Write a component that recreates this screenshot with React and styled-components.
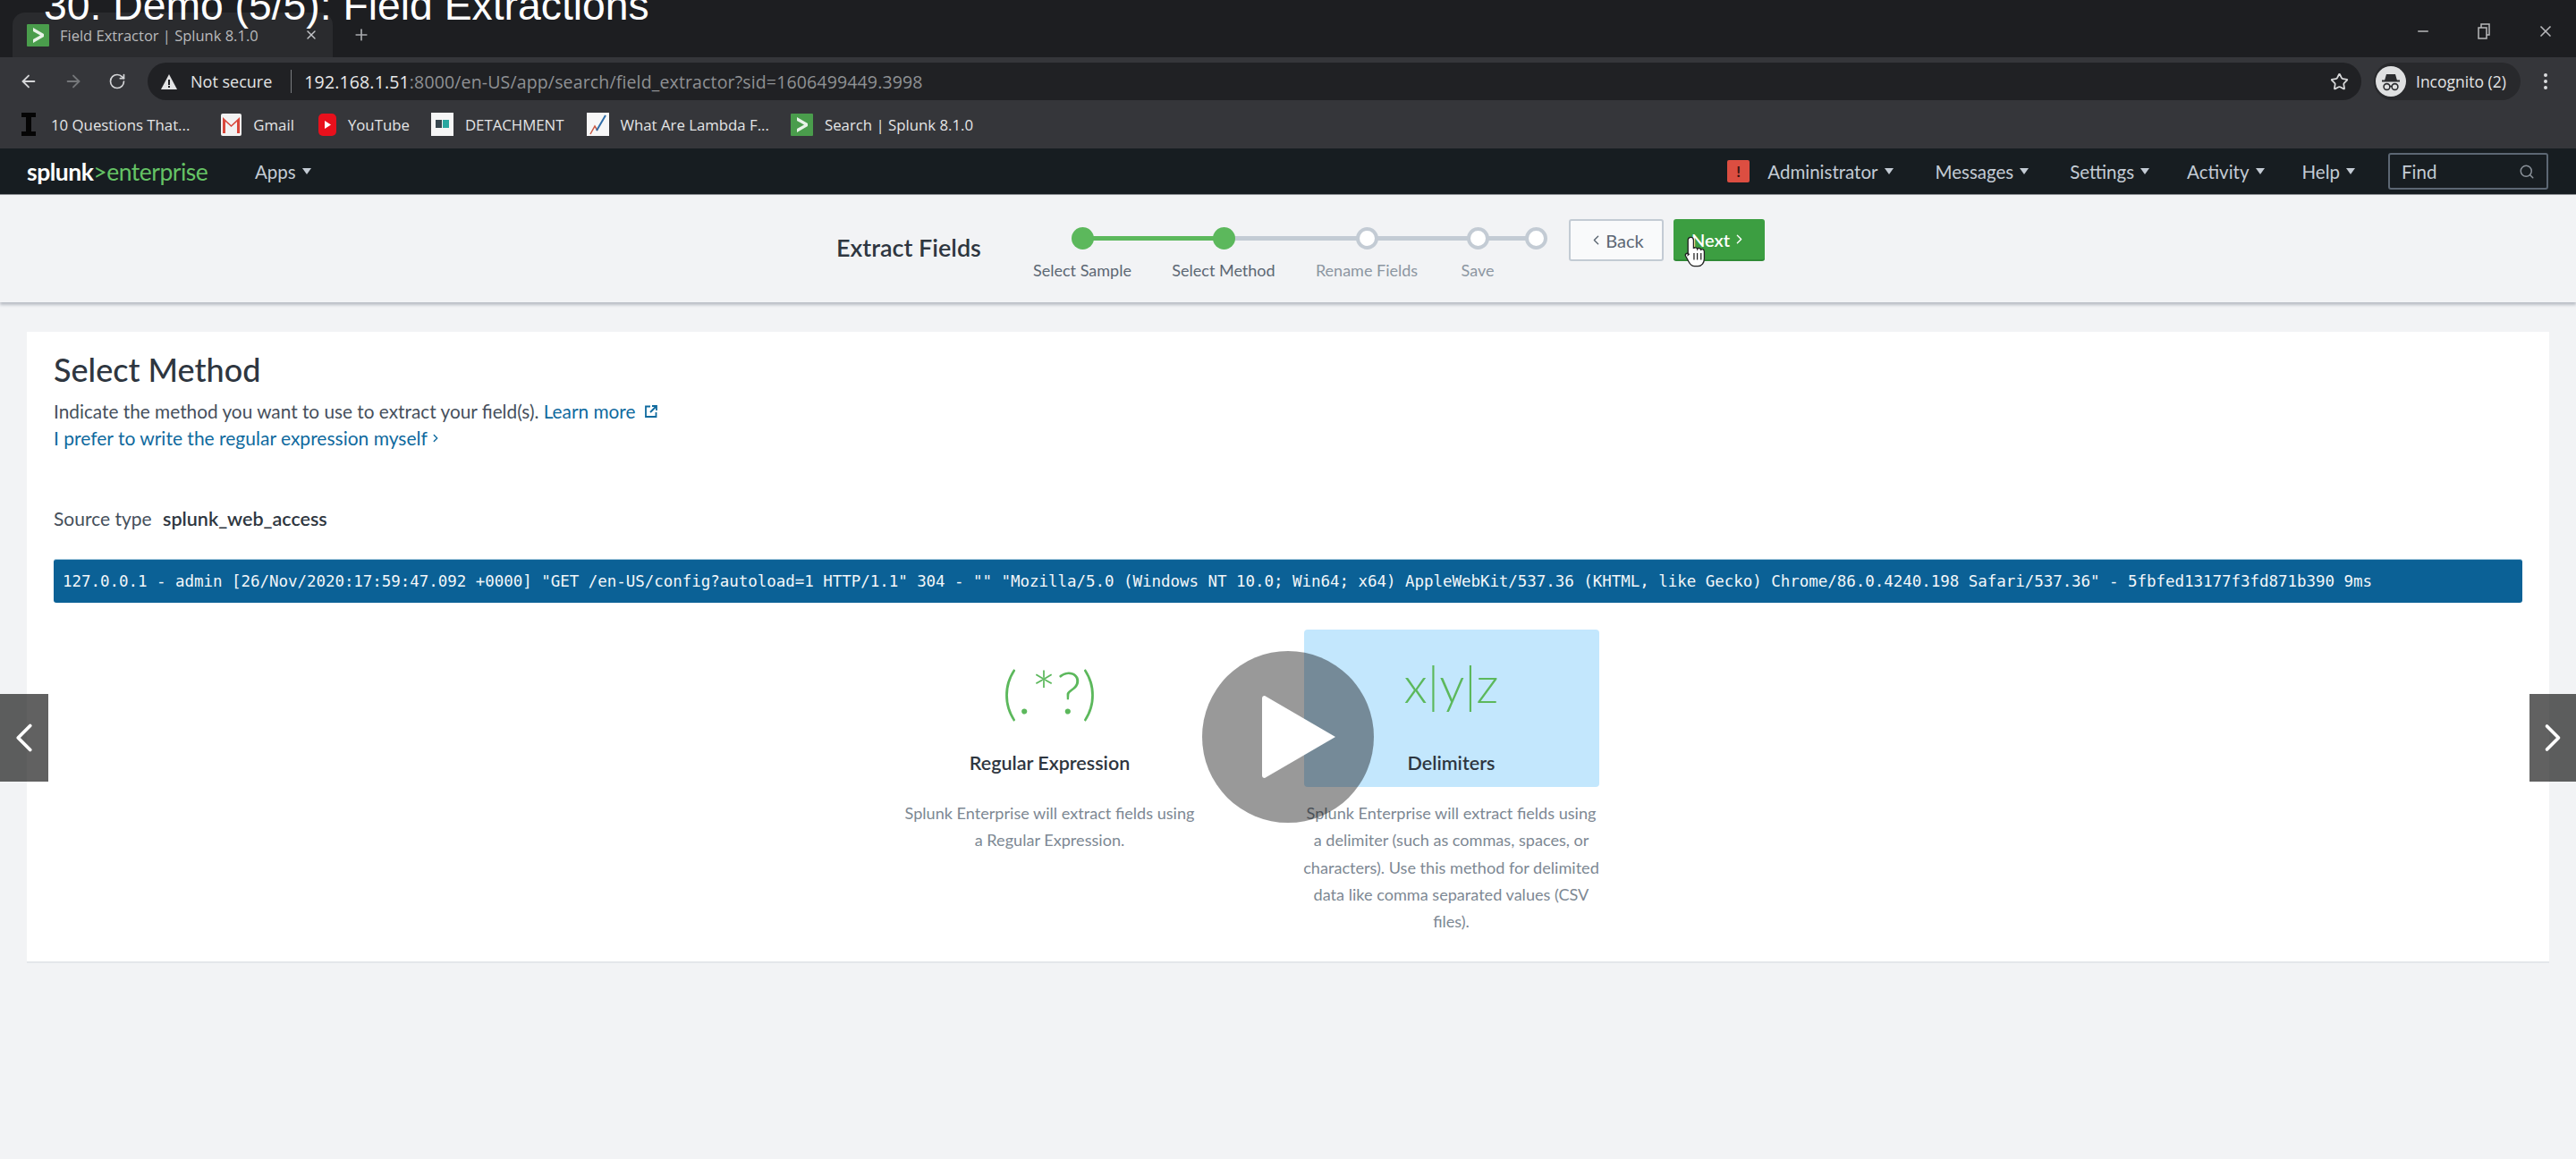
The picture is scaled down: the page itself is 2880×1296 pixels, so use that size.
import styled, { createGlobalStyle } from "styled-components";
import {
  ArrowLeft,
  ArrowRight,
  RotateCw,
  Star,
  Plus,
  X,
  Minus,
  Search,
  ChevronLeft,
  ChevronRight,
  EllipsisVertical,
} from "lucide-react";

const LOG_LINE =
  '127.0.0.1 - admin [26/Nov/2020:17:59:47.092 +0000] "GET /en-US/config?autoload=1 HTTP/1.1" 304 - "" "Mozilla/5.0 (Windows NT 10.0; Win64; x64) AppleWebKit/537.36 (KHTML, like Gecko) Chrome/86.0.4240.198 Safari/537.36" - 5fbfed13177f3fd871b390 9ms';

const STEPS = [
  { label: "Select Sample", width: 158, span: 159, done: true, lineDone: true },
  { label: "Select Method", width: 158, span: 160, done: true },
  { label: "Rename Fields", width: 162, span: 123 },
  { label: "Save", width: 86, span: 65 },
  { label: "", width: 44 },
];

const SplunkFavicon = ({ size = 25 }) => (
  <svg width={size} height={size} viewBox="0 0 25 25">
    <rect width="25" height="25" rx="1" fill="#4a9d4c" />
    <path d="M7 4l12 7v3L7 21v-4l8-4.5L7 8z" fill="#e8f3e8" />
  </svg>
);

const App = () => {
  return (
    <>
      <GlobalStyle />
      <Page>
        <VideoTitle>30. Demo (5/5): Field Extractions</VideoTitle>

        <TabStrip>
          <Tab>
            <SplunkFavicon />
            <TabTitle>Field Extractor | Splunk 8.1.0</TabTitle>
            <X size={16} color="#c4c6c9" />
          </Tab>
          <NewTab>
            <Plus size={20} color="#a9abae" />
          </NewTab>
          <WindowControls>
            <Minus size={18} />
            <svg width="18" height="20" viewBox="0 0 18 20" fill="none" stroke="currentColor" strokeWidth="1.5">
              <rect x="3" y="6" width="9" height="12" />
              <path d="M6 6V2h9v12h-3" />
            </svg>
            <X size={20} />
          </WindowControls>
        </TabStrip>

        <Toolbar>
          <NavIcons>
            <ArrowLeft size={22} color="#d5d6d8" />
            <ArrowRight size={22} color="#75777a" />
            <RotateCw size={20} color="#d5d6d8" />
          </NavIcons>
          <AddressBar>
            <svg width="18" height="17" viewBox="0 0 18 17">
              <path d="M9 0l9 17H0z" fill="#e3e4e5" />
              <path d="M8 6h2v6H8zM8 13h2v2H8z" fill="#202124" />
            </svg>
            <NotSecure>Not secure</NotSecure>
            <AddressDivider />
            <Url>
              <strong>192.168.1.51</strong>:8000/en-US/app/search/field_extractor?sid=1606499449.3998
            </Url>
            <StarIcon>
              <Star size={21} />
            </StarIcon>
          </AddressBar>
          <IncognitoPill>
            <IncognitoBadge>
              <svg width="26" height="26" viewBox="0 0 26 26" fill="none">
                <path d="M8 5h10l2 7H6z" fill="#2b2c2f" />
                <path d="M3 12.5h20" stroke="#2b2c2f" strokeWidth="2" />
                <circle cx="8.5" cy="19" r="3.4" stroke="#2b2c2f" strokeWidth="1.6" />
                <circle cx="17.5" cy="19" r="3.4" stroke="#2b2c2f" strokeWidth="1.6" />
                <path d="M11.5 18.5h3" stroke="#2b2c2f" strokeWidth="1.4" />
              </svg>
            </IncognitoBadge>
            Incognito (2)
          </IncognitoPill>
          <MenuDots>
            <EllipsisVertical size={24} color="#dcdddf" />
          </MenuDots>
        </Toolbar>

        <Bookmarks>
          <Bookmark $left={0} $gap={17}>
            <svg width="16" height="26" viewBox="0 0 16 26">
              <path d="M0 0h16v5h-5v16h5v5H0v-5h5V5H0z" fill="#050505" />
            </svg>
            10 Questions That...
          </Bookmark>
          <Bookmark $left={35}>
            <svg width="23" height="25" viewBox="0 0 23 25">
              <rect width="23" height="25" rx="2" fill="#f2f2f2" />
              <path d="M2 4l9.500 9L21 4v18h-3V9l-6.500 6L5 9v13H2z" fill="#d9473b" />
            </svg>
            Gmail
          </Bookmark>
          <Bookmark $left={27}>
            <svg width="20" height="25" viewBox="0 0 20 25">
              <rect width="20" height="25" rx="5" fill="#e8101c" />
              <path d="M7 8l7 4.500L7 17z" fill="#fff" />
            </svg>
            YouTube
          </Bookmark>
          <Bookmark $left={24}>
            <svg width="25" height="26" viewBox="0 0 25 26">
              <rect width="25" height="26" fill="#f5f5f5" />
              <rect x="5" y="8" width="7" height="9" fill="#38474f" />
              <rect x="13" y="8" width="7" height="9" fill="#2aa7a0" />
            </svg>
            DETACHMENT
          </Bookmark>
          <Bookmark $left={25}>
            <svg width="25" height="26" viewBox="0 0 25 26" fill="none">
              <rect width="25" height="26" fill="#f7f7f7" />
              <path d="M4 24l5-9 3 5" stroke="#c95a45" strokeWidth="1.500" />
              <path d="M11 20L21 3" stroke="#2f6da8" strokeWidth="2" />
            </svg>
            What Are Lambda F...
          </Bookmark>
          <Bookmark $left={24}>
            <SplunkFavicon />
            Search | Splunk 8.1.0
          </Bookmark>
        </Bookmarks>

        <SplunkBar>
          <Logo>
            splunk<LogoGreen>&gt;enterprise</LogoGreen>
          </Logo>
          <NavItem $left={51}>Apps</NavItem>
          <NavRight>
            <AlertBadge>!</AlertBadge>
            <NavItem $left={20}>Administrator</NavItem>
            <NavItem $left={47}>Messages</NavItem>
            <NavItem $left={46}>Settings</NavItem>
            <NavItem $left={42}>Activity</NavItem>
            <NavItem $left={42}>Help</NavItem>
            <FindBox>
              Find
              <Search size={18} color="#8a9199" />
            </FindBox>
          </NavRight>
        </SplunkBar>

        <WizardBar>
          <WizardTitle>Extract Fields</WizardTitle>
          <Stepper>
            {STEPS.map((step, i) => (
              <Step key={i} $width={step.width} $span={step.span} $lineDone={step.lineDone}>
                <Dot $done={step.done} />
                <StepLabel $done={step.done}>{step.label}</StepLabel>
              </Step>
            ))}
          </Stepper>
          <BackButton>
            <ChevronLeft size={17} />
            Back
          </BackButton>
          <NextButton>
            Next
            <ChevronRight size={17} />
            <HandCursor viewBox="0 0 24 36" width="25" height="38">
              <path
                d="M7 3c1.800 0 3 1.200 3 3v9c.4-1.300 3.600-1.300 4 .5.500-1.300 3.500-1.200 4 .8 1-1 3.500-.5 3.500 2V26c0 4-2.500 8-7 8H11c-3 0-4.500-1.800-6-4.500L1.500 23c-1-2 1.500-4 3.500-2l-1 1 0 0V6c0-1.800 1.500-3 3-3z"
                fill="#fff"
                stroke="#222"
                strokeWidth="1.300"
              />
              <path d="M10.500 20v7M14 20v7M18 20v7" stroke="#222" strokeWidth="1.200" />
            </HandCursor>
          </NextButton>
        </WizardBar>

        <Panel>
          <Heading>Select Method</Heading>
          <Intro>
            Indicate the method you want to use to extract your field(s). <Link>Learn more</Link>
            <ExternalIcon viewBox="0 0 14 14" width="14" height="14" fill="none" stroke="#0f6a9e" strokeWidth="1.800">
              <path d="M6 1.500H1v11.500h11.500V8" />
              <path d="M8 1h5v5M13 1L6 8" />
            </ExternalIcon>
          </Intro>
          <RegexLink>
            I prefer to write the regular expression myself
            <ChevronRight size={14} strokeWidth={2.400} />
          </RegexLink>
          <SourceLine>
            Source type <SourceValue>splunk_web_access</SourceValue>
          </SourceLine>
          <EventBar>{LOG_LINE}</EventBar>
          <Methods>
            <Method>
              <Tile>
                <Glyph $size={66}>(.*?)</Glyph>
                <MethodName>Regular Expression</MethodName>
              </Tile>
              <MethodText>
                Splunk Enterprise will extract fields using
                <br />a Regular Expression.
              </MethodText>
            </Method>
            <Method>
              <Tile $selected>
                <Glyph $size={56} $lift={16}>
                  x|y|z
                </Glyph>
                <MethodName>Delimiters</MethodName>
              </Tile>
              <MethodText>
                Splunk Enterprise will extract fields using
                <br />a delimiter (such as commas, spaces, or
                <br />characters). Use this method for delimited
                <br />data like comma separated values (CSV
                <br />files).
              </MethodText>
            </Method>
          </Methods>
        </Panel>

        <PlayButton>
          <svg width="82" height="92" viewBox="0 0 82 92">
            <path d="M3 0l79 46L3 92c-2 0-3-1-3-3V3c0-2 1-3 3-3z" fill="#fff" />
          </svg>
        </PlayButton>
        <SlideArrow $side="left">
          <ChevronLeft size={64} strokeWidth={1.700} />
        </SlideArrow>
        <SlideArrow $side="right">
          <ChevronRight size={64} strokeWidth={1.700} />
        </SlideArrow>
      </Page>
    </>
  );
};

const GlobalStyle = createGlobalStyle`
  * { box-sizing: border-box; }
  body {
    margin: 0;
    background: #f2f3f5;
    font-family: "Lato", "Open Sans", sans-serif;
    overflow: hidden;
  }
`;

const Page = styled.div`
  position: relative;
  width: 2880px;
  height: 1296px;
  overflow: hidden;
  background: #f2f3f5;
`;

const VideoTitle = styled.div`
  position: absolute;
  left: 49px;
  top: -21px;
  font-family: "Liberation Sans", sans-serif;
  font-size: 46.300px;
  line-height: 54px;
  color: #fff;
  white-space: nowrap;
  z-index: 3;
`;

const TabStrip = styled.div`
  display: flex;
  height: 64px;
  padding-left: 14px;
  background: #1d1e21;
`;

const Tab = styled.div`
  display: flex;
  align-items: center;
  width: 358px;
  margin-top: 14px;
  padding: 0 16px;
  background: #2a2b2e;
  border-radius: 14px 14px 0 0;
`;

const TabTitle = styled.span`
  flex: 1;
  margin-left: 12px;
  font-family: "Open Sans", sans-serif;
  font-size: 16.500px;
  color: #b9babc;
  white-space: nowrap;
`;

const NewTab = styled.div`
  display: flex;
  align-items: center;
  margin: 14px 0 0 22px;
`;

const WindowControls = styled.div`
  display: flex;
  align-items: center;
  gap: 50px;
  height: 70px;
  margin-left: auto;
  padding-right: 24px;
  color: #b8b9bb;
`;

const Toolbar = styled.div`
  display: flex;
  align-items: center;
  height: 48px;
  padding-top: 6px;
  background: #35363a;
`;

const NavIcons = styled.div`
  display: flex;
  align-items: center;
  gap: 28px;
  width: 165px;
  padding-left: 21px;
`;

const AddressBar = styled.div`
  display: flex;
  align-items: center;
  width: 2475px;
  height: 42px;
  padding-left: 15px;
  background: #202124;
  border-radius: 21px;
`;

const NotSecure = styled.span`
  margin-left: 15px;
  font-family: "Open Sans", sans-serif;
  font-size: 18px;
  color: #e3e4e5;
`;

const AddressDivider = styled.span`
  width: 1px;
  height: 26px;
  margin: 0 14px 0 21px;
  background: #7a7c80;
`;

const Url = styled.span`
  font-family: "Open Sans", sans-serif;
  font-size: 19.500px;
  letter-spacing: 0.150px;
  color: #8f9194;

  strong {
    font-weight: 400;
    color: #e8e9ea;
  }
`;

const StarIcon = styled.span`
  display: flex;
  margin-left: auto;
  margin-right: 14px;
  color: #d8d9da;
`;

const IncognitoPill = styled.div`
  display: flex;
  align-items: center;
  gap: 11px;
  width: 164px;
  height: 42px;
  margin-left: 14px;
  padding-left: 2px;
  background: #28292c;
  border-radius: 21px;
  font-family: "Open Sans", sans-serif;
  font-size: 17.500px;
  color: #e3e4e5;
  white-space: nowrap;
`;

const IncognitoBadge = styled.span`
  display: flex;
  align-items: center;
  justify-content: center;
  width: 34px;
  height: 34px;
  background: #dfe0e1;
  border-radius: 50%;
`;

const MenuDots = styled.div`
  display: flex;
  margin-left: 16px;
`;

const Bookmarks = styled.div`
  display: flex;
  align-items: center;
  height: 54px;
  padding-left: 24px;
  background: #35363a;
`;

const Bookmark = styled.div`
  display: flex;
  align-items: center;
  gap: ${(props) => props.$gap || 13}px;
  margin-left: ${(props) => props.$left}px;
  font-family: "Open Sans", sans-serif;
  font-size: 16.800px;
  color: #e4e5e6;
  white-space: nowrap;
`;

const SplunkBar = styled.div`
  display: flex;
  align-items: center;
  height: 52px;
  padding: 0 31px 0 30px;
  background: #171d21;
  border-bottom: 1px solid #8d9094;
`;

const Logo = styled.div`
  width: 204px;
  font-size: 26.500px;
  font-weight: 700;
  letter-spacing: -0.500px;
  color: #fff;
  white-space: nowrap;
`;

const LogoGreen = styled.span`
  font-weight: 400;
  color: #65c365;
`;

const NavItem = styled.div`
  display: flex;
  align-items: center;
  margin-left: ${(props) => props.$left}px;
  font-size: 20.500px;
  color: #c3cbd4;

  &::after {
    content: "";
    margin-left: 7px;
    border-top: 7px solid #c3cbd4;
    border-left: 5.500px solid transparent;
    border-right: 5.500px solid transparent;
  }
`;

const NavRight = styled.div`
  display: flex;
  align-items: center;
  margin-left: auto;
`;

const AlertBadge = styled.span`
  display: flex;
  align-items: center;
  justify-content: center;
  width: 25px;
  height: 25px;
  background: #dc4e41;
  border-radius: 2px;
  font-size: 17px;
  font-weight: 700;
  color: #3a1512;
`;

const FindBox = styled.div`
  display: flex;
  align-items: center;
  justify-content: space-between;
  width: 179px;
  height: 41px;
  margin-left: 37px;
  padding: 0 13px;
  border: 2px solid #5c6773;
  border-radius: 3px;
  font-size: 20.500px;
  color: #c3cbd4;
`;

const WizardBar = styled.div`
  display: flex;
  align-items: flex-start;
  justify-content: center;
  height: 120px;
  padding: 27px 0 0 28px;
  background: #f2f3f5;
  box-shadow: 0 3px 3px rgba(60, 70, 90, 0.3);
`;

const WizardTitle = styled.div`
  width: 196px;
  margin-top: 14px;
  font-size: 27px;
  line-height: 36px;
  font-weight: 600;
  color: #2e3640;
  white-space: nowrap;
`;

const Stepper = styled.div`
  display: flex;
  margin-right: 15px;
`;

const Step = styled.div`
  position: relative;
  display: flex;
  flex-direction: column;
  align-items: center;
  width: ${(props) => props.$width}px;
  padding-top: 9px;

  &::before {
    content: "";
    display: ${(props) => (props.$span ? "block" : "none")};
    position: absolute;
    top: 19px;
    left: 50%;
    width: ${(props) => props.$span}px;
    height: 5px;
    background: ${(props) => (props.$lineDone ? "#5cb85c" : "#c3cbd4")};
  }
`;

const Dot = styled.span`
  position: relative;
  width: 25px;
  height: 25px;
  background: ${(props) => (props.$done ? "#5cb85c" : "#fff")};
  border: ${(props) => (props.$done ? "none" : "4px solid #c3cbd4")};
  border-radius: 50%;
`;

const StepLabel = styled.span`
  margin-top: 11px;
  font-size: 18px;
  line-height: 24px;
  color: ${(props) => (props.$done ? "#5c6773" : "#8c96a1")};
  white-space: nowrap;
`;

const BackButton = styled.div`
  display: flex;
  align-items: center;
  justify-content: center;
  gap: 2px;
  width: 106px;
  height: 47px;
  background: #f9fafb;
  border: 2px solid #c3cbd4;
  border-radius: 3px;
  font-size: 20px;
  color: #5c6773;
`;

const NextButton = styled.div`
  position: relative;
  display: flex;
  align-items: center;
  justify-content: center;
  gap: 2px;
  width: 102px;
  height: 47px;
  margin-left: 11px;
  background: #3c9e41;
  border-bottom: 2px solid #2f8a35;
  border-radius: 3px;
  font-size: 20px;
  font-weight: 600;
  color: #fff;
`;

const HandCursor = styled.svg`
  position: absolute;
  left: 12px;
  top: 17px;
`;

const Panel = styled.main`
  height: 706px;
  margin: 33px 30px 0;
  padding: 22px 30px 0;
  background: #fff;
  border-bottom: 2px solid #e4e7ea;
`;

const Heading = styled.h1`
  margin: 0;
  font-size: 36px;
  line-height: 40px;
  font-weight: 500;
  color: #2e3640;
`;

const Intro = styled.p`
  display: flex;
  align-items: center;
  margin: 12px 0 0;
  font-size: 20.800px;
  line-height: 30px;
  color: #46505c;
  white-space: pre;
`;

const Link = styled.span`
  color: #0f6a9e;
`;

const ExternalIcon = styled.svg`
  margin-left: 11px;
`;

const RegexLink = styled.div`
  display: flex;
  align-items: center;
  gap: 2px;
  font-size: 21px;
  line-height: 30px;
  color: #0f6a9e;
`;

const SourceLine = styled.div`
  margin-top: 60px;
  font-size: 21px;
  line-height: 30px;
  color: #46505c;
`;

const SourceValue = styled.strong`
  margin-left: 7px;
  font-size: 21.500px;
  font-weight: 600;
  color: #2e3640;
`;

const EventBar = styled.div`
  height: 49px;
  margin-top: 30px;
  padding-left: 10px;
  background: #0b6196;
  border-top: 1px solid #9bc3d9;
  border-radius: 3px;
  font-family: "DejaVu Sans Mono", monospace;
  font-size: 17.500px;
  letter-spacing: -0.040px;
  line-height: 48px;
  color: #f2f6f9;
  white-space: pre;
`;

const Methods = styled.div`
  display: flex;
  justify-content: center;
  gap: 119px;
  margin-top: 30px;
  padding-right: 84px;
`;

const Method = styled.div`
  width: 330px;
  text-align: center;
`;

const Tile = styled.div`
  height: 176px;
  background: ${(props) => (props.$selected ? "#c3e7fd" : "transparent")};
  border-radius: 4px;
`;

const Glyph = styled.div`
  display: flex;
  align-items: center;
  justify-content: center;
  height: 136px;
  padding-bottom: ${(props) => props.$lift || 0}px;
  font-size: ${(props) => props.$size}px;
  font-weight: 300;
  color: #5cb85c;
`;

const MethodName = styled.div`
  font-size: 21.500px;
  line-height: 26px;
  font-weight: 600;
  color: #2e3640;
`;

const MethodText = styled.p`
  margin: 14px -5px 0;
  font-size: 18.100px;
  line-height: 30.300px;
  color: #7d8893;
  white-space: nowrap;
`;

const PlayButton = styled.div`
  position: absolute;
  left: 1344px;
  top: 728px;
  display: flex;
  align-items: center;
  justify-content: center;
  width: 192px;
  height: 192px;
  padding-left: 24px;
  background: rgba(0, 0, 0, 0.4);
  border-radius: 50%;
`;

const SlideArrow = styled.div`
  position: absolute;
  top: 776px;
  ${(props) => props.$side}: 0;
  display: flex;
  align-items: center;
  justify-content: center;
  width: ${(props) => (props.$side === "left" ? 54 : 52)}px;
  height: 98px;
  background: rgba(0, 0, 0, 0.62);
  color: #fff;
`;

export default App;
